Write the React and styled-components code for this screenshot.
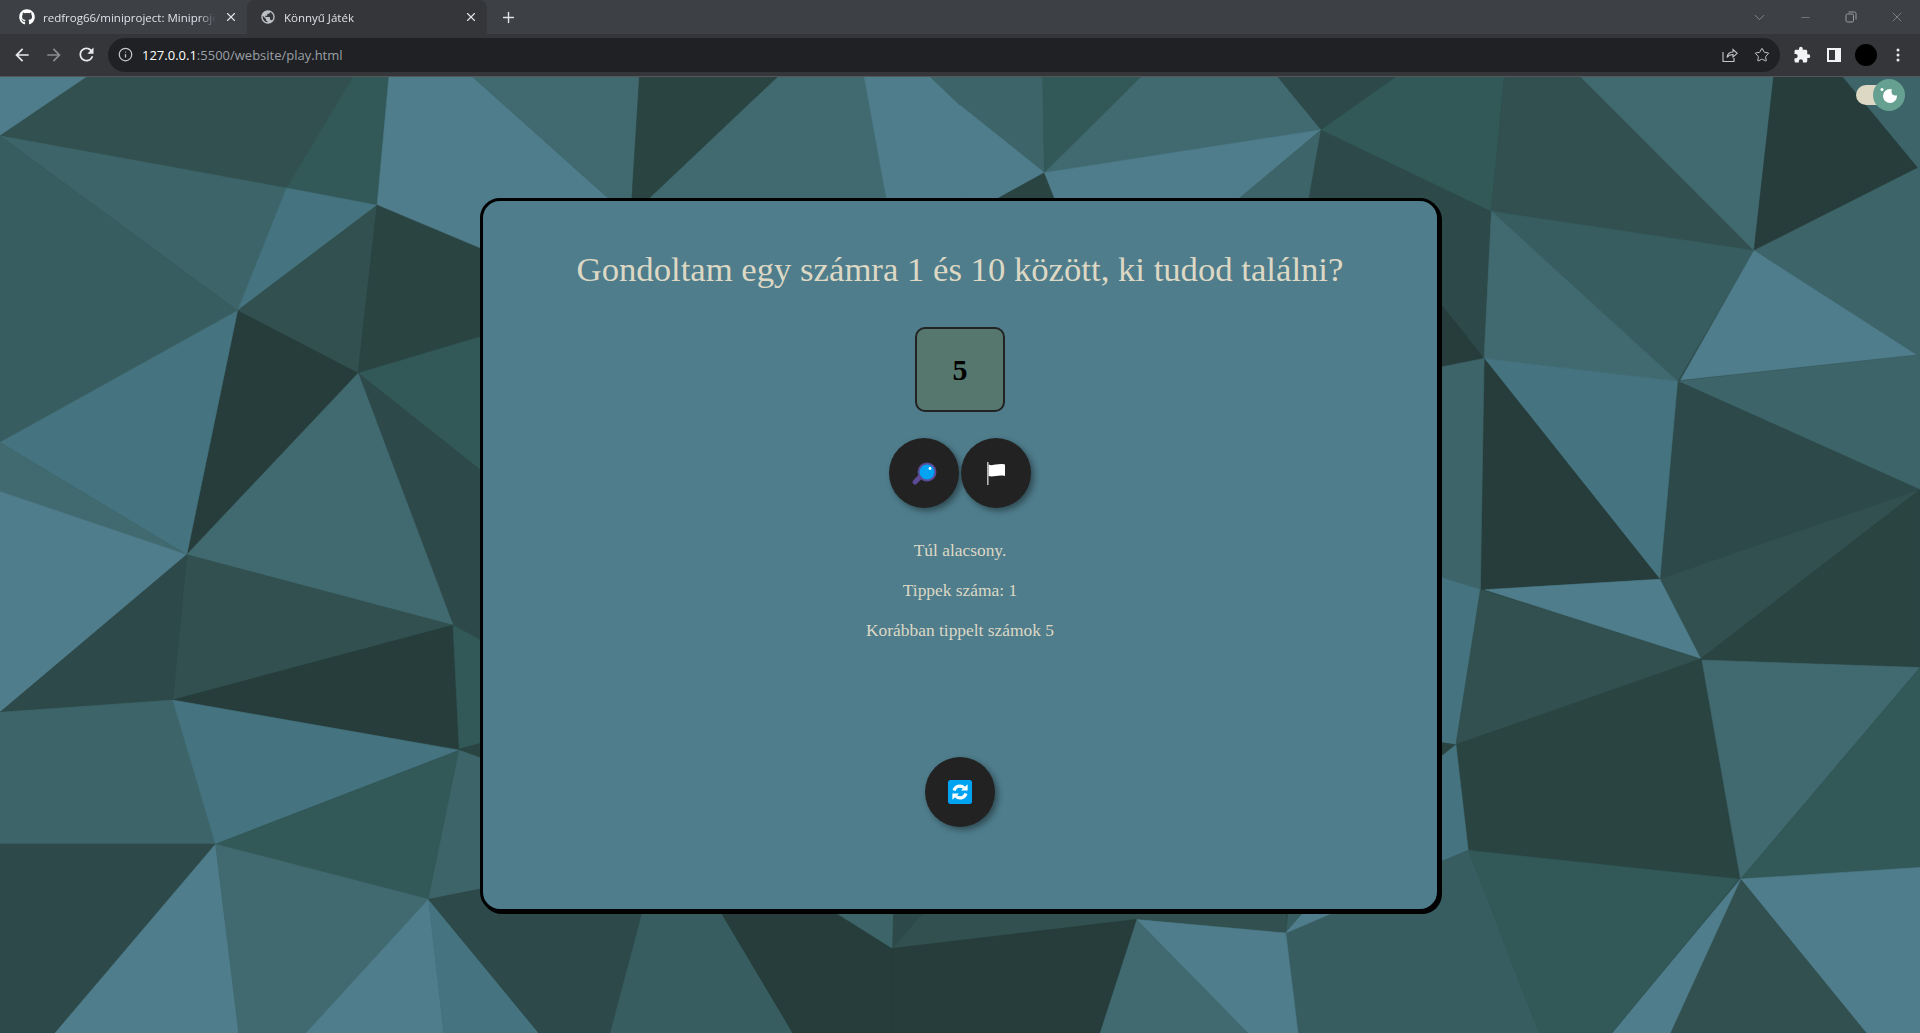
import styled, { createGlobalStyle } from "styled-components"
import { FaGithub } from "react-icons/fa"
import { MdArrowBack, MdArrowForward, MdRefresh, MdExtension, MdPublic } from "react-icons/md"
import { Info, Plus, Star, X, ChevronDown, Minus } from "lucide-react"

const GlobalStyle = createGlobalStyle`
  html, body { margin: 0; padding: 0; height: 100%; overflow: hidden; }
  #root { height: 100%; }
`

// facet colours of the low-poly wallpaper, light to dark
const L = "#4f7d8c", M1 = "#45737f", M2 = "#416a70", M3 = "#3d6468", M4 = "#385d60"
const D1 = "#325858", D2 = "#32504f", D3 = "#2d4949", D4 = "#2a4442", D5 = "#263d3b"

// left half of the wallpaper, coordinates in a 3136x1568 space
const leftFacets = [
  [L, "0,0 155,0 155,11 0,105"],
  [D2, "155,0 582,0 468,190 0,105"],
  [D1, "582,0 636,0 616,218 468,190"],
  [L, "636,0 762,0 995,208 1000,300 785,295 616,218"],
  [M2, "762,0 1045,0 1032,208 995,208"],
  [D4, "1045,0 1280,0 1060,208 1032,208"],
  [M2, "1280,0 1410,0 1448,208 1060,208"],
  [L, "1410,0 1515,0 1568,55 1628,208 1448,208"],
  [M3, "0,105 468,190 388,390"],
  [M4, "0,105 388,390 0,605"],
  [M1, "468,190 616,218 388,390"],
  [D2, "616,218 585,492 388,390"],
  [D4, "616,218 800,295 800,428 585,492"],
  [D5, "388,390 585,492 305,788"],
  [M1, "0,605 388,390 305,788"],
  [M2, "0,605 305,788 0,685"],
  [L, "0,685 305,788 0,1045"],
  [D1, "585,492 800,428 800,662"],
  [D3, "585,492 800,662 800,935 740,903"],
  [M2, "585,492 740,903 305,788"],
  [D2, "305,788 740,903 282,1025"],
  [D3, "305,788 282,1025 0,1045"],
  [D5, "282,1025 740,903 750,1105"],
  [D1, "740,903 800,935 800,1092 750,1105"],
  [D4, "750,1105 800,1092 800,1125"],
  [M3, "0,1045 282,1025 352,1260 0,1260"],
  [M1, "282,1025 750,1107 352,1260"],
  [D1, "750,1107 700,1350 352,1260"],
  [M3, "750,1107 800,1125 800,1335 700,1350"],
  [D3, "0,1260 352,1260 90,1568 0,1568"],
  [L, "352,1260 390,1568 90,1568"],
  [M2, "352,1260 700,1350 500,1568 390,1568"],
  [L, "700,1350 725,1568 500,1568"],
  [M1, "700,1350 880,1568 725,1568"],
  [D3, "700,1350 800,1330 1070,1330 997,1568 880,1568"],
  [M4, "1055,1350 1165,1350 1295,1568 997,1568"],
  [D5, "1165,1350 1330,1350 1458,1430 1568,1415 1568,1568 1295,1568"],
  [M3, "1330,1350 1460,1350 1458,1430"],
  [D3, "1460,1350 1530,1350 1458,1430"],
]

// right half, x offset by 1568
const rightFacets = [
  [M3, "-58,0 135,0 138,165 0,55"],
  [D1, "135,0 305,0 138,165"],
  [M2, "305,0 512,0 590,95 138,165"],
  [D3, "512,0 725,0 590,95"],
  [D1, "725,0 890,0 868,228 590,95"],
  [D2, "890,0 1005,0 1297,292 868,228"],
  [M2, "1005,0 1330,0 1297,292"],
  [D5, "1330,0 1435,0 1565,157 1297,292"],
  [M3, "1435,0 1568,0 1568,465 1297,292 1565,157"],
  [L, "0,55 138,165 60,208 0,208"],
  [D4, "138,165 60,208 155,208"],
  [L, "138,165 590,95 455,208 155,208"],
  [M3, "590,95 455,208 570,208"],
  [D3, "590,95 570,208 770,208 868,228 856,468 770,360"],
  [D5, "770,360 856,468 770,485"],
  [M4, "868,228 1297,292 1172,505"],
  [M2, "868,228 1172,505 856,468"],
  [L, "1297,292 1562,462 1177,503"],
  [M3, "1172,505 1568,462 1568,682"],
  [D3, "1172,505 1568,682 1143,828"],
  [M1, "856,468 1172,505 1143,828"],
  [D5, "856,468 1143,828 850,845"],
  [M3, "770,485 856,468 850,845 770,820"],
  [M1, "770,820 850,845 810,1098 770,1092"],
  [D2, "1143,828 1568,682 1210,958"],
  [D4, "1210,958 1568,682 1568,972"],
  [L, "858,845 1143,828 1210,958"],
  [D2, "850,845 1210,958 810,1098"],
  [D4, "1210,958 810,1098 830,1270 1272,1317"],
  [M2, "1212,960 1568,972 1275,1317"],
  [D1, "1275,1317 1568,972 1568,1298"],
  [L, "1275,1317 1568,1298 1568,1568 1480,1568"],
  [D2, "1275,1317 1480,1568 1160,1568"],
  [L, "1275,1317 1160,1568 1065,1568"],
  [D1, "830,1270 1272,1317 1065,1568 945,1568"],
  [D4, "770,1092 810,1098 770,1130"],
  [M1, "770,1130 810,1098 830,1270 770,1295"],
  [M4, "770,1295 830,1270 945,1568 552,1568 532,1405 540,1350"],
  [L, "532,1405 580,1350 660,1350"],
  [D2, "-110,1430 -40,1350 532,1350 532,1405 288,1383"],
  [L, "288,1383 532,1405 552,1568 470,1568"],
  [M2, "288,1383 470,1568 228,1568"],
  [D5, "-110,1430 288,1383 228,1568 -110,1568"],
]

const Page = styled.div`
  height: 100vh;
  display: flex;
  flex-direction: column;
  font-family: "Open Sans", "Noto Sans", sans-serif;
`

const TabStrip = styled.div`
  height: 34px;
  flex: none;
  display: flex;
  background: #3d4146;
  color: #dfe1e5;
`

const Tab = styled.div`
  width: 240px;
  box-sizing: border-box;
  display: flex;
  align-items: center;
  gap: 8px;
  padding: 0 9px 0 13px;
  font-size: 11.5px;
  border-radius: 8px 8px 0 0;
  background: ${p => (p.$active ? "#35363a" : "transparent")};
  svg { flex: none; }
`

const FirstTab = styled(Tab)`
  width: 247px;
  padding-left: 19px;
`

const TabTitle = styled.span`
  flex: 1;
  min-width: 0;
  white-space: nowrap;
  overflow: hidden;
  -webkit-mask-image: linear-gradient(to right, #000 90%, transparent);
`

const NewTab = styled.div`
  width: 42px;
  display: flex;
  align-items: center;
  justify-content: center;
`

const WindowButtons = styled.div`
  margin-left: auto;
  display: flex;
  color: #9a9da0;
`

const WindowButton = styled.div`
  width: 46px;
  display: flex;
  align-items: center;
  justify-content: center;
`

const Toolbar = styled.div`
  height: 43px;
  flex: none;
  box-sizing: border-box;
  padding-bottom: 1px;
  border-bottom: 1px solid #55575a;
  display: flex;
  align-items: center;
  background: #35363a;
  color: #e8eaed;
`

const NavButton = styled.div`
  width: 32px;
  display: flex;
  align-items: center;
  justify-content: center;
  color: ${p => (p.$muted ? "#8a8c90" : "#e8eaed")};
`

const NavGroup = styled.div`
  display: flex;
  padding-left: 6px;
  width: 108px;
  box-sizing: border-box;
`

const AddressBar = styled.div`
  width: 1672px;
  height: 34px;
  flex: none;
  box-sizing: border-box;
  border-radius: 17px;
  background: #202124;
  display: flex;
  align-items: center;
  padding: 0 10px 0 10px;
  font-size: 13px;
`

const Url = styled.span`
  margin-left: 9px;
  color: #9aa0a6;
  b { color: #fff; font-weight: 400; }
`

const AddressIcons = styled.div`
  margin-left: auto;
  display: flex;
  gap: 16px;
  align-items: center;
  color: #c4c7c9;
`

const Avatar = styled.div`
  width: 22px;
  height: 22px;
  border-radius: 50%;
  background: #000;
`

const ToolIcons = styled.div`
  display: flex;
  padding-left: 6px;
`

const ToolCell = styled.div`
  width: 32px;
  display: flex;
  align-items: center;
  justify-content: center;
`

const Stage = styled.main`
  flex: 1;
  position: relative;
  display: flex;
  align-items: center;
  justify-content: center;
  overflow: hidden;
  background: #2d4949;
`

const Wallpaper = styled.svg`
  position: absolute;
  inset: 0;
  width: 100%;
  height: 100%;
`

const Card = styled.section`
  position: relative;
  width: 960px;
  height: 714px;
  box-sizing: border-box;
  border: 3px solid #000;
  border-radius: 20px;
  box-shadow: 2px 2px 0 #000;
  background: #4f7d8c;
  color: #ddd8c4;
  display: flex;
  flex-direction: column;
  align-items: center;
  font-family: Georgia, "Liberation Serif", serif;
`

const Title = styled.h1`
  margin: 49px 0 0;
  font-size: 34.7px;
  line-height: 40px;
  font-weight: 400;
`

const GuessBox = styled.div`
  margin-top: 37px;
  width: 90px;
  height: 85px;
  box-sizing: border-box;
  border: 2px solid #222;
  border-radius: 10px;
  background: #55776e;
  color: #000;
  display: flex;
  align-items: center;
  justify-content: center;
  font-size: 30px;
  font-weight: 700;
`

const ButtonRow = styled.div`
  margin-top: 26px;
  display: flex;
  gap: 2px;
`

const RoundButton = styled.button`
  width: 70px;
  height: 70px;
  padding: 0;
  border: none;
  border-radius: 50%;
  background: #222;
  box-shadow: 3px 3px 6px rgba(0, 0, 0, 0.4);
  display: flex;
  align-items: center;
  justify-content: center;
`

const ResetButton = styled(RoundButton)`
  margin-top: 118px;
`

const Messages = styled.div`
  margin-top: 33px;
  display: flex;
  flex-direction: column;
  gap: 22px;
  align-items: center;
  font-size: 17.4px;
  line-height: 18px;
`

const ThemeToggle = styled.div`
  position: absolute;
  top: 8px;
  right: 30px;
  width: 34px;
  height: 20px;
  border-radius: 10px;
  background: #ddd8c4;
`

const ToggleKnob = styled.div`
  position: absolute;
  top: -6px;
  right: -15px;
  width: 32px;
  height: 32px;
  border-radius: 50%;
  background: #66a090;
  display: flex;
  align-items: center;
  justify-content: center;
`

function SearchIcon() {
  return (
    <svg width="26" height="26" viewBox="0 0 26 26">
      <line x1="4" y1="22" x2="10" y2="16" stroke="#5c4a96" strokeWidth="5" strokeLinecap="round" />
      <circle cx="16" cy="12" r="8.5" fill="#00a2f2" stroke="#5c4a96" strokeWidth="2" />
      <circle cx="19" cy="8.5" r="1.4" fill="#fff" />
    </svg>
  )
}

function FlagIcon() {
  return (
    <svg width="22" height="24" viewBox="0 0 22 24">
      <rect x="2" y="1" width="1.6" height="23" fill="#b5b5b5" />
      <path d="M3.6 3.5 C8 5.5 12 2 20 3.5 L20 15 C13 13.5 8 16.5 3.6 15 Z" fill="#fff" />
    </svg>
  )
}

function SyncIcon() {
  return (
    <svg width="24" height="24" viewBox="0 0 24 24">
      <rect width="24" height="24" rx="2.5" fill="#00a2f2" />
      <path d="M6 10.5 A6.2 6.2 0 0 1 16 7.6" fill="none" stroke="#fff" strokeWidth="3.2" />
      <path d="M13 10.5 L19.6 10.5 L19.6 4.2 Z" fill="#fff" />
      <path d="M18 13.5 A6.2 6.2 0 0 1 8 16.4" fill="none" stroke="#fff" strokeWidth="3.2" />
      <path d="M11 13.5 L4.4 13.5 L4.4 19.8 Z" fill="#fff" />
    </svg>
  )
}

function MoonIcon() {
  return (
    <svg width="26" height="26" viewBox="0 0 26 26">
      <circle cx="14" cy="14" r="7" fill="#fff" />
      <circle cx="19.5" cy="9.5" r="4" fill="#66a090" />
      <circle cx="6" cy="7.5" r="1.5" fill="#fff" />
    </svg>
  )
}

function ShareIcon() {
  return (
    <svg width="16" height="16" viewBox="0 0 16 16" fill="none" stroke="currentColor" strokeWidth="1.1">
      <path d="M1 5 V14.5 H12 V11" />
      <path d="M5 10.5 C5.5 6.5 8.5 5 11 5 V2.5 L15.2 6.3 L11 10 V7.5 C8.5 7.5 6.5 8.2 5 10.5 Z" />
    </svg>
  )
}

function SidePanelIcon() {
  return (
    <svg width="14" height="14" viewBox="0 0 14 14">
      <path d="M0 0 H14 V14 H0 Z M2 2 V12 H8 V2 Z" fill="#f1f3f4" fillRule="evenodd" />
    </svg>
  )
}

function MoreIcon() {
  return (
    <svg width="4" height="14" viewBox="0 0 4 14" fill="#e8eaed">
      <circle cx="2" cy="2" r="1.5" />
      <circle cx="2" cy="7" r="1.5" />
      <circle cx="2" cy="12" r="1.5" />
    </svg>
  )
}

function RestoreIcon() {
  return (
    <svg width="12" height="12" viewBox="0 0 12 12" fill="none" stroke="currentColor">
      <rect x="1" y="3" width="7.5" height="8" rx="1.5" />
      <path d="M3.5 1 H9.5 A1.5 1.5 0 0 1 11 2.5 V8.5" />
    </svg>
  )
}

export default function App() {
  return (
    <Page>
      <GlobalStyle />
      <TabStrip>
        <FirstTab>
          <FaGithub size={16} color="#fff" />
          <TabTitle>redfrog66/miniproject: Miniprojekt</TabTitle>
          <X size={14} />
        </FirstTab>
        <Tab $active>
          <MdPublic size={16} color="#bdc1c6" />
          <TabTitle>Könnyű Játék</TabTitle>
          <X size={14} />
        </Tab>
        <NewTab><Plus size={17} /></NewTab>
        <WindowButtons>
          <WindowButton><ChevronDown size={17} strokeWidth={1} /></WindowButton>
          <WindowButton><Minus size={13} strokeWidth={1} /></WindowButton>
          <WindowButton><RestoreIcon /></WindowButton>
          <WindowButton><X size={16} strokeWidth={1} /></WindowButton>
        </WindowButtons>
      </TabStrip>
      <Toolbar>
        <NavGroup>
          <NavButton><MdArrowBack size={20} /></NavButton>
          <NavButton $muted><MdArrowForward size={20} /></NavButton>
          <NavButton><MdRefresh size={21} /></NavButton>
        </NavGroup>
        <AddressBar>
          <Info size={15} color="#c4c7c9" />
          <Url><b>127.0.0.1</b>:5500/website/play.html</Url>
          <AddressIcons>
            <ShareIcon />
            <Star size={16} strokeWidth={1.5} />
          </AddressIcons>
        </AddressBar>
        <ToolIcons>
          <ToolCell><MdExtension size={18} color="#f1f3f4" /></ToolCell>
          <ToolCell><SidePanelIcon /></ToolCell>
          <ToolCell><Avatar /></ToolCell>
          <ToolCell><MoreIcon /></ToolCell>
        </ToolIcons>
      </Toolbar>
      <Stage>
        <Wallpaper viewBox="0 9 3136 1559" preserveAspectRatio="none">
          {leftFacets.map(([c, pts], i) => (
            <polygon key={i} points={pts} fill={c} stroke={c} strokeWidth="1" />
          ))}
          <g transform="translate(1568 0)">
            {rightFacets.map(([c, pts], i) => (
              <polygon key={i} points={pts} fill={c} stroke={c} strokeWidth="1" />
            ))}
          </g>
        </Wallpaper>
        <ThemeToggle>
          <ToggleKnob><MoonIcon /></ToggleKnob>
        </ThemeToggle>
        <Card>
          <Title>Gondoltam egy számra 1 és 10 között, ki tudod találni?</Title>
          <GuessBox>5</GuessBox>
          <ButtonRow>
            <RoundButton><SearchIcon /></RoundButton>
            <RoundButton><FlagIcon /></RoundButton>
          </ButtonRow>
          <Messages>
            <div>Túl alacsony.</div>
            <div>Tippek száma: 1</div>
            <div>Korábban tippelt számok 5</div>
          </Messages>
          <ResetButton><SyncIcon /></ResetButton>
        </Card>
      </Stage>
    </Page>
  )
}
